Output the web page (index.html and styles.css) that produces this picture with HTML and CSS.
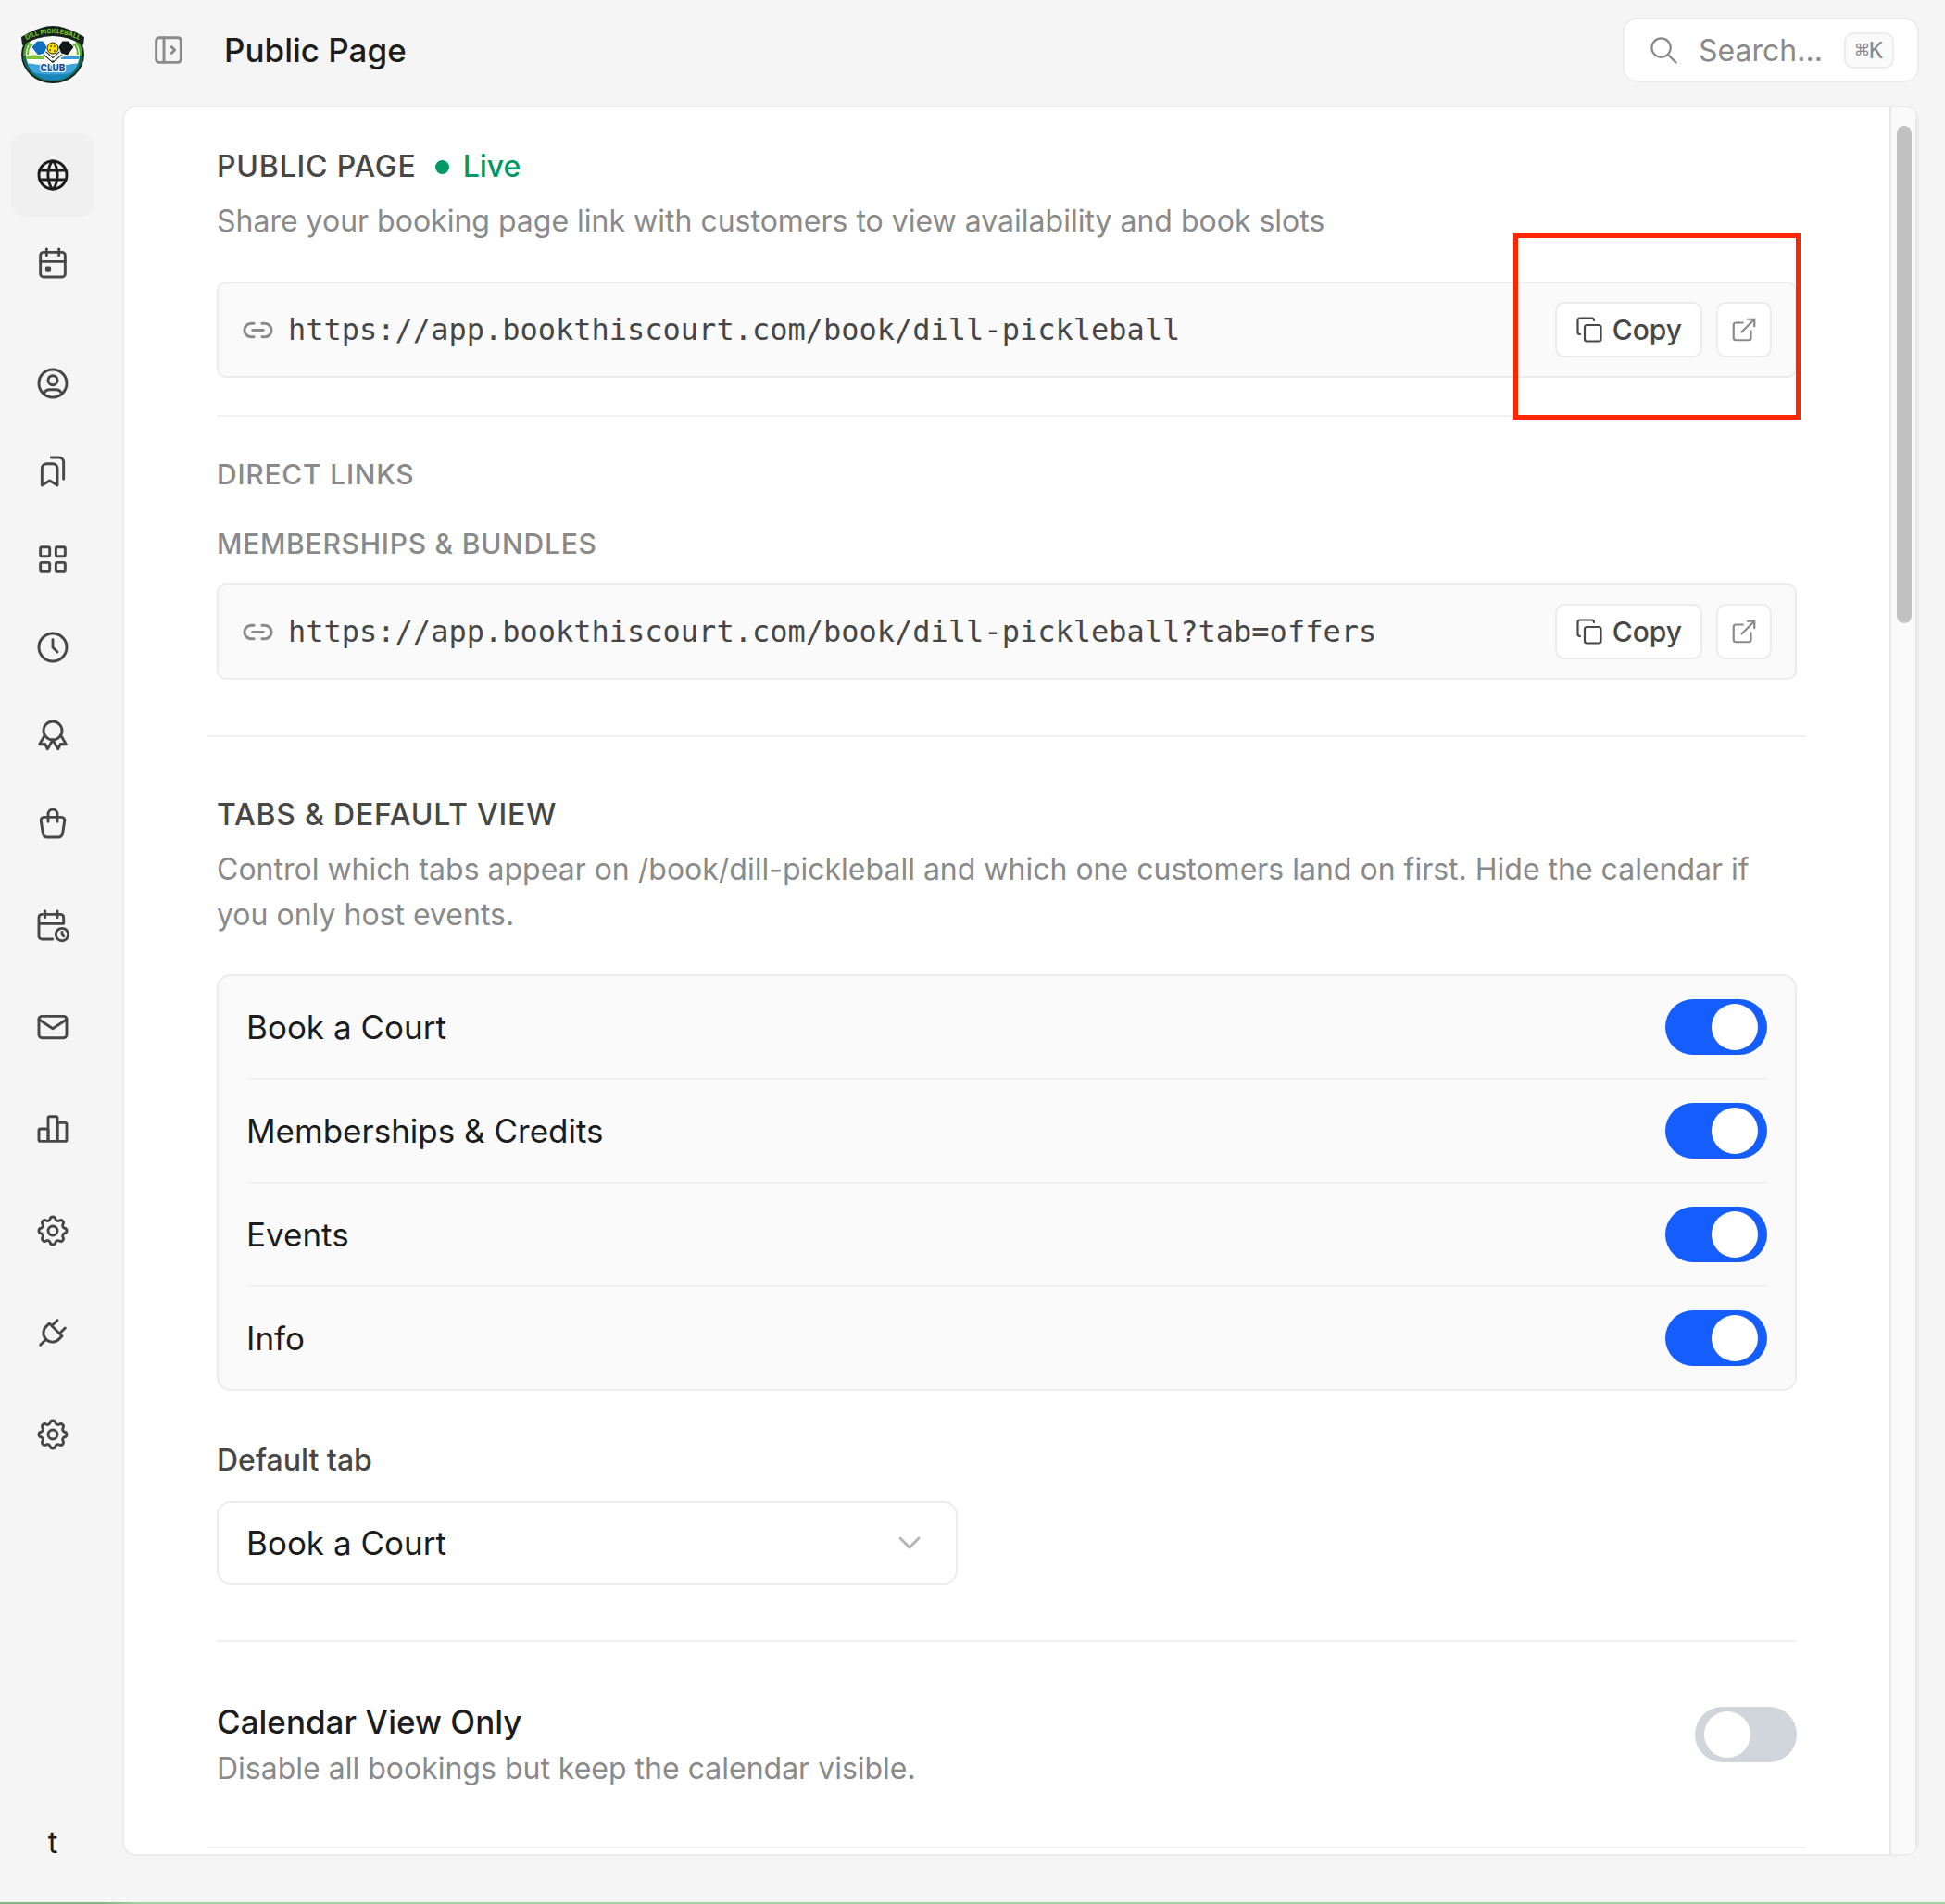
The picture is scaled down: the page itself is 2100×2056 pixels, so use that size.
FILE: index.html
```html
<!DOCTYPE html>
<html lang="en">
<head>
<meta charset="utf-8">
<meta name="viewport" content="width=device-width, initial-scale=1">
<title>Public Page</title>
<link rel="stylesheet" href="styles.css">
</head>
<body>
<svg class="sprite" aria-hidden="true">
  <symbol id="i-copy" viewBox="0 0 24 24"><rect x="8" y="8" width="14" height="14" rx="2"/><path d="M4 16c-1.1 0-2-.9-2-2V4c0-1.1.9-2 2-2h10c1.1 0 2 .9 2 2"/></symbol>
  <symbol id="i-external" viewBox="0 0 24 24"><path d="M15 3h6v6M10 14 21 3M18 13v6a2 2 0 0 1-2 2H5a2 2 0 0 1-2-2V8a2 2 0 0 1 2-2h6"/></symbol>
  <symbol id="i-link" viewBox="0 0 24 24"><path d="M9 17H7A5 5 0 0 1 7 7h2M15 7h2a5 5 0 1 1 0 10h-2M8 12h8"/></symbol>
  <symbol id="i-gear" viewBox="0 0 24 24"><path d="M10.325 4.317c.426-1.756 2.924-1.756 3.35 0a1.724 1.724 0 0 0 2.573 1.066c1.543-.94 3.31.826 2.37 2.37a1.724 1.724 0 0 0 1.065 2.572c1.756.426 1.756 2.924 0 3.35a1.724 1.724 0 0 0-1.066 2.573c.94 1.543-.826 3.31-2.37 2.37a1.724 1.724 0 0 0-2.572 1.065c-.426 1.756-2.924 1.756-3.35 0a1.724 1.724 0 0 0-2.573-1.066c-1.543.94-3.31-.826-2.37-2.37a1.724 1.724 0 0 0-1.065-2.572c-1.756-.426-1.756-2.924 0-3.35a1.724 1.724 0 0 0 1.066-2.573c-.94-1.543.826-3.31 2.37-2.37 1 .608 2.296.07 2.572-1.065z"/><circle cx="12" cy="12" r="3"/></symbol>
</svg>
<div class="app">
  <aside class="sidebar">
    <a class="logo" href="#" aria-label="Dill Pickleball Club">
      <svg viewBox="0 0 70 64">
        <defs>
          <clipPath id="badge"><ellipse cx="35" cy="34" rx="29" ry="27"/></clipPath>
          <path id="arc" d="M0 21Q35-1 70 21"/>
        </defs>
        <ellipse cx="35" cy="33" rx="34" ry="31" fill="#15231c"/>
        <ellipse cx="35" cy="33" rx="32" ry="29" fill="#4ea52f"/>
        <path d="M3 34a32 28 0 0 0 64 0z" fill="#0c6a5c"/>
        <ellipse cx="35" cy="33" rx="29" ry="26" fill="#fff"/>
        <g clip-path="url(#badge)">
          <path d="M6 30h58v8H6z" fill="#f3f6d8"/>
          <path d="M6 35q9-3 20 0v3H6z" fill="#7fbf3a"/>
          <path d="M44 36q8-3 20-1v3H44z" fill="#3d9bd8"/>
          <path d="M6 42q29 5 58 0q-2 15-29 18Q8 57 6 42z" fill="#3fa3dc"/>
          <path d="M12 52q23 5 46 0-8 9-23 9t-23-9z" fill="#1a86b8"/>
        </g>
        <path d="M8 22q5-1 7 5M62 22q-5-1-7 5M8 33q0-6 3-11M62 33q0-6-3-11" fill="none" stroke="#5fb42a" stroke-width="2"/>
        <path d="M26 31l9 8M44 31l-9 8" stroke="#15231c" stroke-width="5" stroke-linecap="round"/>
        <path d="M26 31l9 8M44 31l-9 8" stroke="#fff" stroke-width="3"/>
        <path d="M12 25l6-7h7l4 7-3 7-7 2z" fill="#0f6fc0" stroke="#fff" stroke-width="1"/>
        <path d="M58 25l-6-7h-7l-4 7 3 7 7 2z" fill="#10181c" stroke="#fff" stroke-width="1"/>
        <circle cx="35" cy="26" r="6" fill="#ffe000" stroke="#15231c"/>
        <g fill="#5d5200"><circle cx="33" cy="24" r="1"/><circle cx="37" cy="24" r="1"/><circle cx="32" cy="28" r="1"/><circle cx="37" cy="29" r="1"/></g>
        <path d="M1 14Q35-8 69 14l-1 9Q35 3 2 23z" fill="#15231c"/>
        <text class="logo-arc" text-anchor="middle"><textPath href="#arc" startOffset="50%">DILL PICKLEBALL</textPath></text>
        <text class="logo-club" x="35" y="51" text-anchor="middle">CLUB</text>
      </svg>
    </a>
    <nav class="nav" aria-label="Main">
      <a class="nav-item is-active" href="#" aria-label="Public page"><svg class="icon" viewBox="0 0 24 24"><circle cx="12" cy="12" r="9"/><path d="M3.600 9h16.800M3.600 15h16.800M11.500 3a17 17 0 0 0 0 18M12.500 3a17 17 0 0 1 0 18"/></svg></a>
      <a class="nav-item" href="#" aria-label="Calendar"><svg class="icon" viewBox="0 0 24 24"><rect x="4" y="5" width="16" height="16" rx="2"/><path d="M16 3v4M8 3v4M4 11h16M8 15h2v2H8z"/></svg></a>
      <a class="nav-item group-start" href="#" aria-label="Customers"><svg class="icon" viewBox="0 0 24 24"><circle cx="12" cy="12" r="9"/><circle cx="12" cy="10" r="3"/><path d="M6.168 18.849A4 4 0 0 1 10 16h4a4 4 0 0 1 3.834 2.855"/></svg></a>
      <a class="nav-item" href="#" aria-label="Bookings"><svg class="icon" viewBox="0 0 24 24"><path d="M15 10v11l-5-3-5 3V10a3 3 0 0 1 3-3h4a3 3 0 0 1 3 3zM11 3h5a3 3 0 0 1 3 3v11"/></svg></a>
      <a class="nav-item" href="#" aria-label="Courts"><svg class="icon" viewBox="0 0 24 24"><rect x="4" y="4" width="6" height="6" rx="1"/><rect x="14" y="4" width="6" height="6" rx="1"/><rect x="4" y="14" width="6" height="6" rx="1"/><rect x="14" y="14" width="6" height="6" rx="1"/></svg></a>
      <a class="nav-item" href="#" aria-label="Hours"><svg class="icon" viewBox="0 0 24 24"><circle cx="12" cy="12" r="9"/><path d="M12 7v5l3 3"/></svg></a>
      <a class="nav-item" href="#" aria-label="Memberships"><svg class="icon" viewBox="0 0 24 24"><circle cx="12" cy="9" r="6"/><path d="M12 15l3.400 5.890 1.598-3.233 3.598.232-3.400-5.889M6.802 12l-3.400 5.890L7 17.657l1.598 3.232 3.400-5.889"/></svg></a>
      <a class="nav-item" href="#" aria-label="Shop"><svg class="icon" viewBox="0 0 24 24"><path d="M6.331 8H17.670a2 2 0 0 1 1.977 2.304l-1.255 8.152A3 3 0 0 1 15.426 21H8.574a3 3 0 0 1-2.965-2.544l-1.255-8.152A2 2 0 0 1 6.331 8zM9 11V6a3 3 0 0 1 6 0v5"/></svg></a>
      <a class="nav-item section-start" href="#" aria-label="Events"><svg class="icon" viewBox="0 0 24 24"><path d="M11.795 21H5a2 2 0 0 1-2-2V7a2 2 0 0 1 2-2h12a2 2 0 0 1 2 2v4M15 3v4M7 3v4M3 11h16M18 16.496V18l1 1"/><circle cx="18" cy="18" r="4"/></svg></a>
      <a class="nav-item section-start" href="#" aria-label="Messages"><svg class="icon" viewBox="0 0 24 24"><rect x="3" y="5" width="18" height="14" rx="2"/><path d="M3 7l9 6 9-6"/></svg></a>
      <a class="nav-item section-start" href="#" aria-label="Reports"><svg class="icon" viewBox="0 0 24 24"><rect x="3" y="12" width="6" height="8" rx="1"/><rect x="9" y="4" width="6" height="16" rx="1"/><rect x="15" y="8" width="6" height="12" rx="1"/></svg></a>
      <a class="nav-item section-start" href="#" aria-label="Settings"><svg class="icon"><use href="#i-gear"/></svg></a>
      <a class="nav-item section-start" href="#" aria-label="Integrations"><svg class="icon" viewBox="0 0 24 24"><path d="M9.785 6L18 14.215l-2.054 2.054a5.810 5.810 0 1 1-8.215-8.215zM4 20l3.500-3.500M15 4l-3.500 3.500M20 9l-3.500 3.500"/></svg></a>
      <a class="nav-item section-start" href="#" aria-label="Account settings"><svg class="icon"><use href="#i-gear"/></svg></a>
    </nav>
    <button class="avatar" type="button">t</button>
  </aside>

  <div class="main">
    <header class="topbar">
      <button class="collapse" type="button" aria-label="Expand sidebar"><svg class="icon" viewBox="0 0 24 24"><rect x="4" y="4" width="16" height="16" rx="2"/><path d="M9 4v16M14 10l2 2-2 2"/></svg></button>
      <h1 class="page-title">Public Page</h1>
      <label class="search">
        <svg class="icon search-icon" viewBox="0 0 24 24"><circle cx="10" cy="10" r="7"/><path d="M21 21l-6-6"/></svg>
        <input class="search-input" type="text" placeholder="Search..." aria-label="Search">
        <kbd class="kbd">⌘K</kbd>
      </label>
    </header>

    <div class="panel">
      <main class="content">
        <section class="section section-first">
          <div class="heading-row">
            <h2 class="heading">Public Page</h2>
            <span class="status">Live</span>
          </div>
          <p class="desc">Share your booking page link with customers to view availability and book slots</p>
          <div class="link-box link-main">
            <svg class="icon link-icon"><use href="#i-link"/></svg>
            <span class="url">https://app.bookthiscourt.com/book/dill-pickleball</span>
            <button class="btn" type="button"><svg class="icon"><use href="#i-copy"/></svg>Copy</button>
            <a class="btn btn-icon" href="#" aria-label="Open link"><svg class="icon"><use href="#i-external"/></svg></a>
            <div class="highlight"></div>
          </div>
          <hr class="rule rule-inner">
          <h3 class="subheading">Direct Links</h3>
          <h4 class="subheading subheading-next">Memberships &amp; Bundles</h4>
          <div class="link-box">
            <svg class="icon link-icon"><use href="#i-link"/></svg>
            <span class="url">https://app.bookthiscourt.com/book/dill-pickleball?tab=offers</span>
            <button class="btn" type="button"><svg class="icon"><use href="#i-copy"/></svg>Copy</button>
            <a class="btn btn-icon" href="#" aria-label="Open link"><svg class="icon"><use href="#i-external"/></svg></a>
          </div>
        </section>
        <hr class="rule">
        <section class="section">
          <h2 class="heading">Tabs &amp; Default View</h2>
          <p class="desc">Control which tabs appear on /book/dill-pickleball and which one customers land on first. Hide the calendar if you only host events.</p>
          <div class="tab-list">
            <label class="tab-row">Book a Court<input class="toggle" type="checkbox" checked></label>
            <label class="tab-row">Memberships &amp; Credits<input class="toggle" type="checkbox" checked></label>
            <label class="tab-row">Events<input class="toggle" type="checkbox" checked></label>
            <label class="tab-row">Info<input class="toggle" type="checkbox" checked></label>
          </div>
          <label class="field-label" for="default-tab">Default tab</label>
          <div class="select-wrap">
            <select class="select" id="default-tab">
              <option>Book a Court</option>
              <option>Memberships &amp; Credits</option>
              <option>Events</option>
              <option>Info</option>
            </select>
            <svg class="icon chevron" viewBox="0 0 24 24"><path d="M6 9l6 6 6-6"/></svg>
          </div>
          <hr class="rule">
        </section>
        <section class="section option">
          <div>
            <label class="option-title" for="calendar-only">Calendar View Only</label>
            <p class="option-desc">Disable all bookings but keep the calendar visible.</p>
          </div>
          <input class="toggle" id="calendar-only" type="checkbox">
        </section>
        <hr class="rule">
      </main>
      <div class="scrollbar"><div class="scroll-thumb"></div></div>
    </div>
  </div>
</div>
</body>
</html>
```

FILE: styles.css
```css
:root {
  --bg: #f5f5f5;
  --ink: #1c1c1c;
  --text: #474747;
  --muted: #8a8a8a;
  --line: #ececec;
  --rule: #f1f1f1;
  --soft: #fafafa;
  --blue: #155dfc;
  --green: #009966;
  --mono: "DejaVu Sans Mono", "Liberation Mono", monospace;
}

* { box-sizing: border-box; }

body {
  margin: 0;
  background: var(--bg);
  color: var(--ink);
  font-family: Inter, "Liberation Sans", sans-serif;
  font-size: 32px;
  line-height: 49px;
}

h1, h2, h3, h4, p { margin: 0; font-weight: 400; }
button, input, select { font: inherit; color: inherit; }
a { color: inherit; text-decoration: none; }

.sprite { position: absolute; width: 0; height: 0; }

.icon {
  display: block;
  flex: none;
  width: 40px;
  height: 40px;
  fill: none;
  stroke: currentColor;
  stroke-width: 1.75;
  stroke-linecap: round;
  stroke-linejoin: round;
}

.app {
  display: grid;
  grid-template-columns: 132px minmax(0, 1fr);
  min-height: 100vh;
  border-bottom: 2px solid;
  border-image: linear-gradient(to right, #84b284 110px, #a3d0a3 150px) 1;
}

/* Sidebar */
.sidebar {
  display: flex;
  flex-direction: column;
  padding: 26px 30px 40px 12px;
}
.logo { display: block; width: 70px; height: 64px; margin-left: 10px; }
.logo svg { display: block; width: 100%; height: 100%; overflow: visible; }
.logo-arc { font-size: 7px; font-weight: 700; fill: #7cd02a; }
.logo-club { font-size: 10px; font-weight: 800; fill: #0f4f9c; stroke: #fff; stroke-width: 2px; paint-order: stroke; }
.nav { display: flex; flex-direction: column; gap: 5px; margin-top: 54px; }
.nav-item {
  display: grid;
  place-items: center;
  width: 90px;
  height: 90px;
  border-radius: 15px;
  color: var(--text);
}
.nav-item.is-active { background: #f0f0f0; color: var(--ink); }
.group-start { margin-top: 35px; }
.section-start { margin-top: 15px; }
.avatar {
  width: 90px;
  margin-top: auto;
  padding: 0;
  border: 0;
  background: none;
  line-height: 48px;
}

/* Header */
.main {
  display: flex;
  flex-direction: column;
  min-width: 0;
  padding: 0 28px 50px 0;
}
.topbar {
  display: flex;
  align-items: center;
  height: 114px;
  padding: 0 0 6px 30px;
}
.collapse { padding: 0; border: 0; background: none; color: var(--muted); }
.page-title { margin-left: 40px; font-size: 35px; font-weight: 500; }
.search {
  display: flex;
  align-items: center;
  width: 320px;
  height: 70px;
  margin-left: auto;
  padding: 0 25px;
  border: 2px solid var(--line);
  border-radius: 15px;
  background: #fff;
  color: var(--muted);
}
.search-icon { width: 35px; height: 35px; margin-right: 20px; stroke-width: 1.5; }
.search-input {
  flex: 1;
  min-width: 0;
  padding: 0;
  border: 0;
  outline: 0;
  background: none;
}
.search-input::placeholder { color: var(--muted); opacity: 1; }
.kbd {
  padding: 0 10px;
  border: 2px solid var(--line);
  border-radius: 10px;
  background: var(--soft);
  font-family: var(--mono);
  font-size: 25px;
  line-height: 35px;
}

/* Panel */
.panel {
  display: flex;
  flex: 1;
  overflow: hidden;
  border: 2px solid var(--line);
  border-radius: 15px;
  background: #fff;
}
.content { flex: 1; min-width: 0; padding: 0 90px; }
.scrollbar {
  width: 30px;
  padding: 20px 4px 0 6px;
  border: solid #e8e8e8;
  border-width: 0 2px;
  background: var(--soft);
}
.scroll-thumb { width: 16px; height: 537px; border-radius: 8px; background: #c1c1c1; }

.section { padding: 60px 10px 0; }
.section-first { padding-top: 40px; }
.rule { height: 2px; margin: 60px 0 0; border: 0; background: var(--rule); }
.rule-inner { margin: 40px 0; }

.heading-row { display: flex; align-items: center; gap: 20px; }
.heading {
  color: var(--text);
  font-size: 32px;
  font-weight: 500;
  letter-spacing: 0.025em;
  line-height: 48px;
  text-transform: uppercase;
}
.status {
  display: flex;
  align-items: center;
  gap: 15px;
  color: var(--green);
  font-weight: 500;
  line-height: 48px;
}
.status::before { content: ""; width: 15px; height: 15px; border-radius: 50%; background: currentColor; }
.desc { margin-top: 10px; color: var(--muted); }

.link-box {
  position: relative;
  display: flex;
  align-items: center;
  gap: 15px;
  min-height: 104px;
  margin-top: 20px;
  padding: 0 25px;
  border: 2px solid var(--line);
  border-radius: 10px;
  background: var(--soft);
}
.link-main { margin-top: 41px; }
.link-icon { width: 35px; height: 35px; color: var(--muted); stroke-width: 2; }
.url {
  flex: 1;
  min-width: 0;
  color: var(--text);
  font-family: var(--mono);
}
.btn {
  display: flex;
  align-items: center;
  gap: 10px;
  height: 60px;
  padding: 0 20px;
  border: 2px solid var(--line);
  border-radius: 10px;
  background: #fff;
  color: var(--text);
  font-size: 30px;
  font-weight: 500;
}
.btn .icon { width: 30px; height: 30px; stroke-width: 1.75; }
.btn-icon { width: 60px; padding: 0 13px; color: var(--muted); }
.highlight {
  position: absolute;
  top: -54px;
  right: -6px;
  width: 310px;
  height: 201px;
  border: 5px solid #ff2600;
  pointer-events: none;
}

.subheading {
  color: var(--muted);
  font-size: 30px;
  font-weight: 500;
  letter-spacing: 0.025em;
  line-height: 45px;
  text-transform: uppercase;
}
.subheading-next { margin-top: 30px; }

.tab-list {
  margin-top: 40px;
  padding: 0 30px;
  border: 2px solid var(--line);
  border-radius: 15px;
  background: var(--soft);
}
.tab-row {
  display: flex;
  align-items: center;
  justify-content: space-between;
  height: 110px;
  font-size: 35px;
}
.tab-row + .tab-row { height: 112px; border-top: 2px solid var(--rule); }

.toggle {
  appearance: none;
  flex: none;
  display: flex;
  align-items: center;
  width: 110px;
  height: 60px;
  margin: 0;
  padding: 0 10px;
  border-radius: 30px;
  background: #d1d5dc;
}
.toggle::before { content: ""; width: 50px; height: 50px; border-radius: 50%; background: #fff; }
.toggle:checked { justify-content: flex-end; background: var(--blue); }

.field-label {
  display: block;
  margin-top: 50px;
  color: var(--text);
  font-weight: 500;
}
.select-wrap {
  display: grid;
  align-items: center;
  max-width: 800px;
  margin-top: 20px;
}
.select {
  grid-area: 1 / 1;
  appearance: none;
  width: 100%;
  height: 90px;
  padding: 0 30px;
  border: 2px solid var(--line);
  border-radius: 15px;
  background: #fff;
  font-size: 35px;
}
.chevron { grid-area: 1 / 1; justify-self: end; margin-right: 32px; color: #b5b5b5; pointer-events: none; }

.option { display: flex; justify-content: space-between; }
.option-title { display: block; font-size: 35px; font-weight: 500; line-height: 52px; }
.option-desc { color: var(--muted); }
.option .toggle { margin-top: 10px; }
```
